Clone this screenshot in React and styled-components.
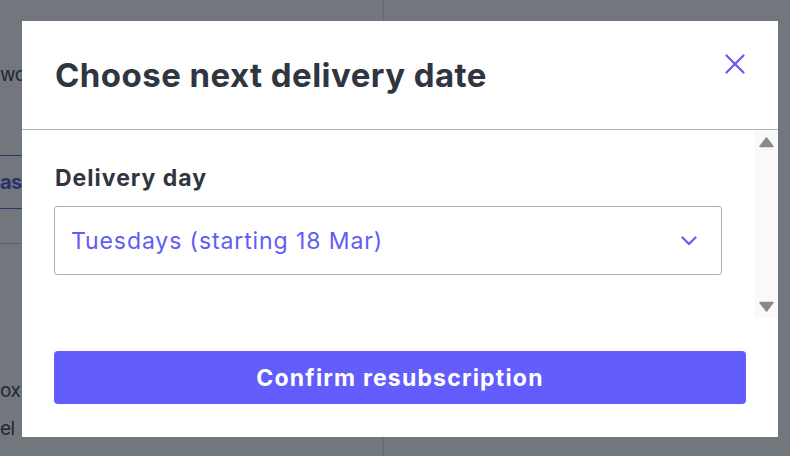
import React from "react";
import styled, { createGlobalStyle } from "styled-components";

const Global = createGlobalStyle`
  html, body { margin: 0; padding: 0; }
  body {
    width: 790px;
    height: 456px;
    overflow: hidden;
    background: #ffffff;
    font-family: Inter, "Noto Sans", sans-serif;
    color: #333a44;
  }
  * { box-sizing: border-box; }
`;

const Page = styled.div`
  display: flex;
  width: 790px;
  height: 456px;
`;

const LeftColumn = styled.div`
  width: 384px;
  border-right: 1px solid #dcdfe3;
  display: flex;
  flex-direction: column;
  padding-top: 62px;
`;

const PageText = styled.p`
  margin: ${(p) => p.$mt || 0}px 0 0 0;
  font-size: 19px;
  line-height: 26px;
  letter-spacing: -0.5px;
  white-space: nowrap;
  color: #333a44;
`;

const LinkRow = styled.div`
  margin-top: 67px;
  height: 54px;
  border-top: 1px solid #5a55e0;
  border-bottom: 1px solid #5a55e0;
  display: flex;
  align-items: center;
  font-size: 20px;
  font-weight: 700;
  letter-spacing: -0.5px;
  color: #4f4ad6;
  white-space: nowrap;
`;

const Divider = styled.div`
  margin-top: 34px;
  border-top: 1px solid #c9cdd2;
`;

const RightColumn = styled.div`
  flex: 1;
`;

const Overlay = styled.div`
  position: fixed;
  inset: 0;
  background: rgba(20, 28, 38, 0.6);
  padding: 21px 12px 0 22px;
`;

const Modal = styled.div`
  width: 756px;
  height: 416px;
  background: #ffffff;
  display: flex;
  flex-direction: column;
`;

const Header = styled.div`
  height: 109px;
  border-bottom: 1px solid #b3b7bd;
  display: flex;
  align-items: flex-start;
  justify-content: space-between;
  padding: 33px 33px 0 33px;
`;

const Title = styled.h2`
  margin: 0;
  font-size: 33px;
  line-height: 43px;
  font-weight: 700;
  letter-spacing: 0.45px;
  color: #2f3640;
`;

const CloseButton = styled.button`
  border: 0;
  background: none;
  padding: 0;
  width: 20px;
  height: 20px;
  cursor: pointer;
  display: flex;
  align-items: center;
  justify-content: center;
`;

const BodyRow = styled.div`
  height: 188px;
  display: flex;
`;

const BodyContent = styled.div`
  flex: 1;
  padding: 33px 33px 0 32px;
`;

const Label = styled.div`
  font-size: 23px;
  line-height: 30px;
  font-weight: 700;
  letter-spacing: 1px;
  color: #2f3640;
  padding-left: 1px;
  margin-bottom: 13px;
`;

const Select = styled.div`
  height: 69px;
  border: 1px solid #aeb3bb;
  border-radius: 3px;
  display: flex;
  align-items: center;
  justify-content: space-between;
  padding: 0 24px 0 16px;
  font-size: 23px;
  letter-spacing: 0.9px;
  color: #615cf6;
`;

const Scrollbar = styled.div`
  width: 23px;
  background: #f9f9f9;
  display: flex;
  flex-direction: column;
  justify-content: space-between;
  align-items: center;
  padding: 7px 4px 6px 4px;
`;

const Footer = styled.div`
  padding: 33px 32px 0 32px;
`;

const PrimaryButton = styled.button`
  width: 100%;
  height: 53px;
  border: 0;
  border-radius: 4px;
  background: #635dfe;
  color: #ffffff;
  font-family: Inter, "Noto Sans", sans-serif;
  font-size: 23px;
  font-weight: 700;
  letter-spacing: 1.2px;
  cursor: pointer;
`;

const Arrow = ({ down }) => (
  <svg width="15" height="11" viewBox="0 0 15 11">
    <path
      d={down ? "M1 1.5 H14 L7.5 10 Z" : "M1 9.5 H14 L7.5 1 Z"}
      fill="#8a8a8a"
      stroke="#8a8a8a"
      strokeWidth="1.5"
      strokeLinejoin="round"
    />
  </svg>
);

export default function App() {
  return (
    <>
      <Global />
      <Page>
        <LeftColumn>
          <PageText>wo</PageText>
          <LinkRow>as</LinkRow>
          <Divider />
          <PageText $mt={134}>ox</PageText>
          <PageText $mt={12}>el</PageText>
        </LeftColumn>
        <RightColumn />
      </Page>
      <Overlay>
        <Modal role="dialog" aria-label="Choose next delivery date">
          <Header>
            <Title>Choose next delivery date</Title>
            <CloseButton aria-label="Close">
              <svg width="20" height="20" viewBox="0 0 20 20">
                <path
                  d="M1.5 1.5 L18.5 18.5 M18.5 1.5 L1.5 18.5"
                  stroke="#615cf6"
                  strokeWidth="2.2"
                  strokeLinecap="round"
                />
              </svg>
            </CloseButton>
          </Header>
          <BodyRow>
            <BodyContent>
              <Label>Delivery day</Label>
              <Select>
                <span>Tuesdays (starting 18 Mar)</span>
                <svg width="16" height="10" viewBox="0 0 16 10">
                  <path
                    d="M1.5 1.5 L8 8 L14.5 1.5"
                    fill="none"
                    stroke="#615cf6"
                    strokeWidth="2.2"
                    strokeLinecap="round"
                    strokeLinejoin="round"
                  />
                </svg>
              </Select>
            </BodyContent>
            <Scrollbar>
              <Arrow />
              <Arrow down />
            </Scrollbar>
          </BodyRow>
          <Footer>
            <PrimaryButton>Confirm resubscription</PrimaryButton>
          </Footer>
        </Modal>
      </Overlay>
    </>
  );
}
